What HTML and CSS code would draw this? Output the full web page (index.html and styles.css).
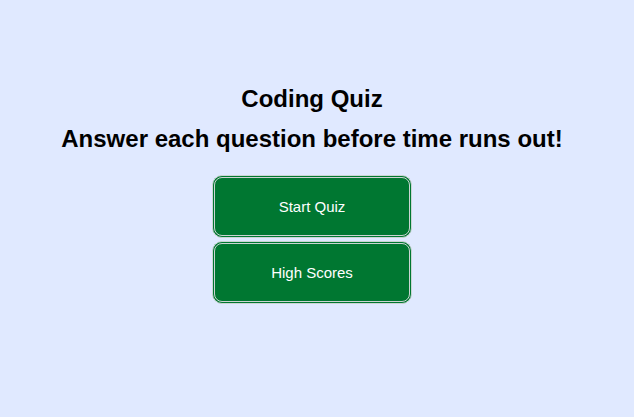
FILE: index.html
```html
<!DOCTYPE html>
<html lang="en">
<head>
<meta charset="utf-8">
<title>Coding Quiz</title>
<link rel="stylesheet" href="styles.css">
</head>
<body>
<main class="home">
<h1 class="title">Coding Quiz</h1>
<h2 class="title">Answer each question before time runs out!</h2>
<div class="actions">
<button class="btn" type="button">Start Quiz</button>
<button class="btn" type="button">High Scores</button>
</div>
</main>
</body>
</html>
```
FILE: styles.css
```css
* {
  box-sizing: border-box;
}

body {
  margin: 0;
  min-height: 100vh;
  background: #e0e9ff;
  color: #000;
  font-family: "Liberation Sans", Arial, sans-serif;
}

.home {
  display: flex;
  flex-direction: column;
  align-items: center;
  padding: 79px 10px 0 0;
}

.title {
  margin: 0;
  font-size: 24px;
  line-height: 40px;
  text-align: center;
}

.actions {
  display: flex;
  flex-direction: column;
  gap: 3px;
  margin-top: 16px;
}

.btn {
  width: 200px;
  height: 63px;
  padding: 0 6px 1px;
  border: 3px double #cbd5d3;
  border-radius: 10px;
  background: #007731;
  color: #fff;
  font-family: inherit;
  font-size: 15px;
  cursor: pointer;
}
```
